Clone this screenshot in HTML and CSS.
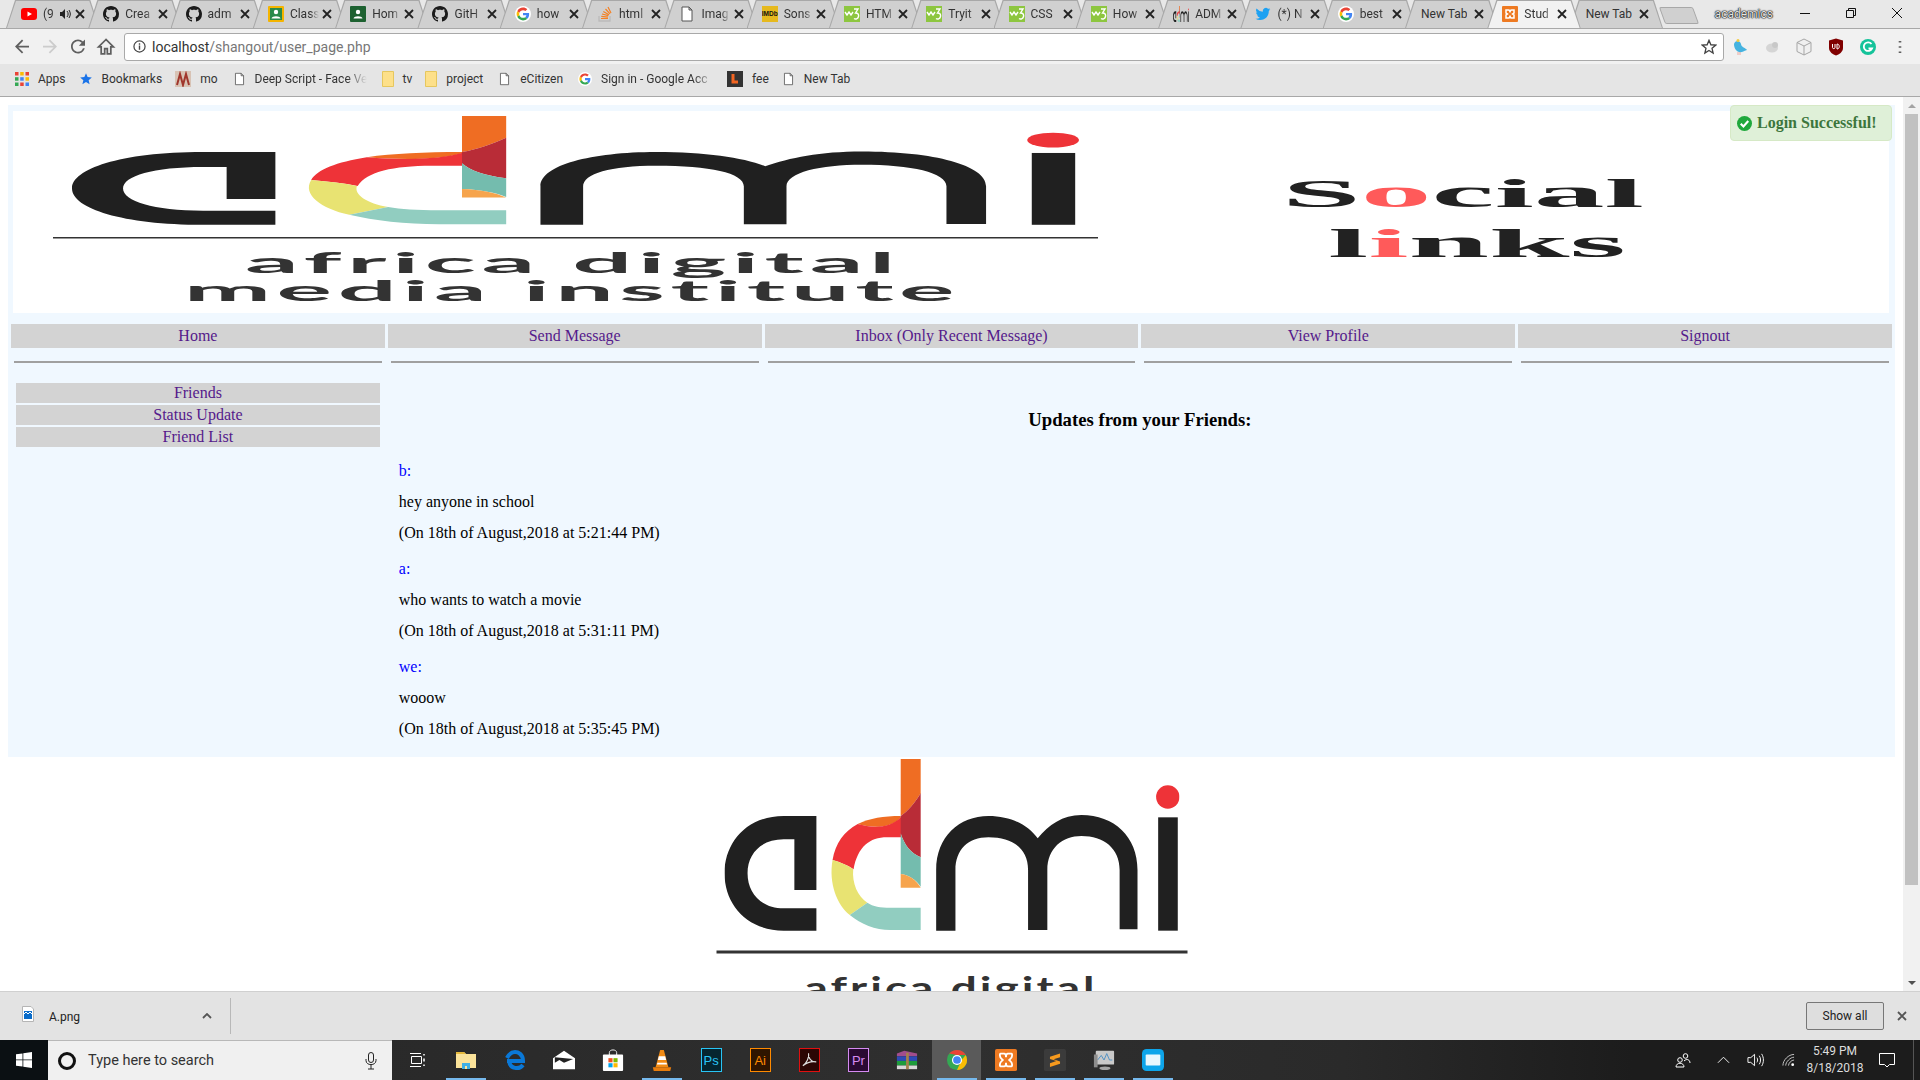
FILE: index.html
```html
<!DOCTYPE html>
<html lang="en">
<head>
  <meta charset="UTF-8" />
  <title>Student page</title>
  <link rel="stylesheet" href="styles.css">
</head>
<body>
  <svg class="defs" width="0" height="0">
    <symbol id="admi-mark" viewBox="128 27 1322 516" preserveAspectRatio="none">
      <path fill="#202020" d="M395 198L300 198C190 198 128 280 128 370C128 465 195 542 300 542L395 542L395 475L300 475C235 475 195 430 195 370C195 310 235 268 300 268L331 268L331 420L395 420Z"/>
      <path fill="#ef6d23" d="M515 222C550 205 590 198 640 198L640 203C610 235 560 235 515 222Z"/>
      <path fill="#ee3338" d="M442 330C450 280 475 245 515 222C560 235 610 235 642 200L642 262L600 262C550 262 515 290 503 358C485 345 465 337 442 330Z"/>
      <path fill="#e8e372" d="M442 330C465 337 485 345 502 358C498 400 515 440 543 458L492 495C455 465 430 400 442 330Z"/>
      <path fill="#91cdc0" d="M543 458C560 470 580 473 610 473L698 473L698 540L610 540C565 540 525 522 492 495Z"/>
      <path fill="#ef6d23" d="M640 27L698 27L698 130C680 160 660 185 640 198Z"/>
      <path fill="#b92c37" d="M698 130L698 322C670 310 650 285 640 250L640 198C660 185 680 160 698 130Z"/>
      <path fill="#74bcae" d="M640 250C650 285 670 310 698 322L698 410C685 390 665 375 640 372Z"/>
      <path fill="#f6a44d" d="M640 372C665 375 685 390 698 413L640 413Z"/>
      <path fill="#202020" d="M743 542L743 360C743 260 810 198 895 198C960 198 1010 225 1038 265C1070 225 1110 195 1165 195C1260 195 1328 260 1328 360L1328 538L1276 538L1276 360C1276 295 1230 258 1165 258C1110 258 1066 295 1066 360L1066 540L1010 540L1010 360C1010 295 965 262 895 262C835 262 799 300 799 360L799 542Z"/>
      <rect fill="#202020" x="1388" y="202" width="57" height="340"/>
      <ellipse fill="#ee3338" cx="1416" cy="141" rx="34" ry="35"/>
    </symbol>
    <symbol id="i-x" viewBox="0 0 10 10"><path d="M1 1L9 9M9 1L1 9" fill="none" stroke="#222" stroke-width="1.8"/></symbol>
    <symbol id="i-gh" viewBox="0 0 16 16"><path fill="#1b1b1b" d="M8 0C3.58 0 0 3.58 0 8c0 3.54 2.29 6.53 5.47 7.59.4.07.55-.17.55-.38 0-.19-.01-.82-.01-1.49-2.01.37-2.53-.49-2.69-.94-.09-.23-.48-.94-.82-1.13-.28-.15-.68-.52-.01-.53.63-.01 1.08.58 1.23.82.72 1.21 1.87.87 2.33.66.07-.52.28-.87.51-1.07-1.78-.2-3.64-.89-3.64-3.95 0-.87.31-1.59.82-2.15-.08-.2-.36-1.02.08-2.12 0 0 .67-.21 2.2.82.64-.18 1.32-.27 2-.27.68 0 1.36.09 2 .27 1.53-1.04 2.2-.82 2.2-.82.44 1.1.16 1.92.08 2.12.51.56.82 1.27.82 2.15 0 3.07-1.87 3.75-3.65 3.95.29.25.54.73.54 1.48 0 1.07-.01 1.93-.01 2.2 0 .21.15.46.55.38A8.013 8.013 0 0016 8c0-4.42-3.58-8-8-8z"/></symbol>
    <symbol id="i-g" viewBox="-6 -6 60 60">
      <circle cx="24" cy="24" r="30" fill="#fff"/>
      <path fill="#EA4335" d="M24 9.5c3.54 0 6.71 1.22 9.21 3.6l6.85-6.85C35.9 2.38 30.47 0 24 0 14.62 0 6.51 5.38 2.56 13.22l7.98 6.19C12.43 13.72 17.74 9.5 24 9.5z"/>
      <path fill="#4285F4" d="M46.98 24.55c0-1.57-.15-3.09-.38-4.55H24v9.02h12.94c-.58 2.96-2.26 5.48-4.78 7.18l7.73 6c4.51-4.18 7.09-10.36 7.09-17.65z"/>
      <path fill="#FBBC05" d="M10.53 28.59c-.48-1.45-.76-2.99-.76-4.59s.27-3.14.76-4.59l-7.98-6.19C.92 16.46 0 20.12 0 24c0 3.88.92 7.54 2.56 10.78l7.97-6.19z"/>
      <path fill="#34A853" d="M24 48c6.48 0 11.93-2.13 15.89-5.81l-7.73-6c-2.15 1.45-4.92 2.3-8.16 2.3-6.26 0-11.57-4.22-13.47-9.91l-7.98 6.19C6.51 42.62 14.62 48 24 48z"/>
    </symbol>
    <symbol id="i-doc" viewBox="0 0 16 16"><path d="M3 1H10L13 4V15H3ZM10 1V4H13" fill="#fff" stroke="#555" stroke-width="1"/></symbol>
    <symbol id="i-w3" viewBox="0 0 16 16">
      <rect width="16" height="16" fill="#8dc63f"/>
      <path d="M1 6L3 9L5 6L7 9L9 6M10 3H14L11.5 7C14 7 15 8.5 14.5 10.5C14 13 11.5 13.5 10 12.5" fill="none" stroke="#fff" stroke-width="1.4"/>
    </symbol>
    <symbol id="i-folder" viewBox="0 0 12 16"><path d="M.5 .5H11.5V15.5H.5Z" fill="#fde08a" stroke="#e6c75e"/></symbol>
    <symbol id="i-person" viewBox="0 0 16 16"><circle cx="8" cy="6" r="2.2" fill="#fff"/><path d="M3.5 12.5C4 9.5 12 9.5 12.5 12.5Z" fill="#fff"/></symbol>
  </svg>

  <header class="chrome">
    <div class="tabstrip">
      <div class="tab tab-audio">
        <svg class="fav" viewBox="0 0 16 16"><rect y="2" width="16" height="12" rx="3" fill="#f00"/><path d="M6.5 5.5V10.5L11 8Z" fill="#fff"/></svg>
        <span class="tab-title">(9</span>
        <svg class="speaker" viewBox="0 0 12 12"><path d="M1 4H3L6 1V11L3 8H1Z" fill="#222"/><path d="M8 3C9.5 5 9.5 7 8 9M10 2C11.8 5 11.8 7 10 10" fill="none" stroke="#222"/></svg>
        <svg class="tab-x"><use href="#i-x"/></svg>
      </div>
      <div class="tab"><svg class="fav"><use href="#i-gh"/></svg><span class="tab-title">Crea</span><svg class="tab-x"><use href="#i-x"/></svg></div>
      <div class="tab"><svg class="fav"><use href="#i-gh"/></svg><span class="tab-title">adm</span><svg class="tab-x"><use href="#i-x"/></svg></div>
      <div class="tab">
        <svg class="fav" viewBox="0 0 16 16"><rect width="16" height="16" rx="1" fill="#f4b400"/><rect x="2" y="2" width="12" height="12" fill="#2a8a4a"/><use href="#i-person"/></svg>
        <span class="tab-title">Class</span><svg class="tab-x"><use href="#i-x"/></svg>
      </div>
      <div class="tab">
        <svg class="fav" viewBox="0 0 16 16"><rect width="16" height="16" rx="1" fill="#1d6130"/><use href="#i-person"/></svg>
        <span class="tab-title">Hom</span><svg class="tab-x"><use href="#i-x"/></svg>
      </div>
      <div class="tab"><svg class="fav"><use href="#i-gh"/></svg><span class="tab-title">GitH</span><svg class="tab-x"><use href="#i-x"/></svg></div>
      <div class="tab"><svg class="fav"><use href="#i-g"/></svg><span class="tab-title">how</span><svg class="tab-x"><use href="#i-x"/></svg></div>
      <div class="tab">
        <svg class="fav" viewBox="0 0 16 16"><path d="M2 10V15H13V10" fill="none" stroke="#bcbbbb" stroke-width="1.3"/><path d="M4 12.5H11M4.3 10.3L11 11.2M5 8L11.4 9.6M6.3 5.5L12 8.8M8.5 3L13 7.8M11 1L14 7" fill="none" stroke="#f48024" stroke-width="1.2"/></svg>
        <span class="tab-title">html</span><svg class="tab-x"><use href="#i-x"/></svg>
      </div>
      <div class="tab"><svg class="fav"><use href="#i-doc"/></svg><span class="tab-title">Imag</span><svg class="tab-x"><use href="#i-x"/></svg></div>
      <div class="tab">
        <span class="fav imdb">IMDb</span>
        <span class="tab-title">Sons</span><svg class="tab-x"><use href="#i-x"/></svg>
      </div>
      <div class="tab"><svg class="fav"><use href="#i-w3"/></svg><span class="tab-title">HTM</span><svg class="tab-x"><use href="#i-x"/></svg></div>
      <div class="tab"><svg class="fav"><use href="#i-w3"/></svg><span class="tab-title">Tryit</span><svg class="tab-x"><use href="#i-x"/></svg></div>
      <div class="tab"><svg class="fav"><use href="#i-w3"/></svg><span class="tab-title">CSS</span><svg class="tab-x"><use href="#i-x"/></svg></div>
      <div class="tab"><svg class="fav"><use href="#i-w3"/></svg><span class="tab-title">How</span><svg class="tab-x"><use href="#i-x"/></svg></div>
      <div class="tab"><svg class="fav"><use href="#admi-mark"/></svg><span class="tab-title">ADM</span><svg class="tab-x"><use href="#i-x"/></svg></div>
      <div class="tab">
        <svg class="fav" viewBox="0 0 24 24"><path fill="#1da1f2" d="M23 5c-.8.4-1.7.6-2.6.7.9-.6 1.6-1.4 2-2.5-.9.5-1.9.9-2.9 1.1A4.6 4.6 0 0011.7 8.500 13 13 0 012.300 3.700a4.600 4.600 0 001.400 6.100c-.7 0-1.400-.2-2.100-.6 0 2.200 1.600 4.100 3.700 4.600-.7.2-1.400.2-2.100.1.6 1.900 2.300 3.200 4.300 3.200A9.200 9.200 0 01.700 19a13 13 0 007 2c8.500 0 13.300-7.200 13-13.600.9-.7 1.700-1.500 2.300-2.400z"/></svg>
        <span class="tab-title">(*) N</span><svg class="tab-x"><use href="#i-x"/></svg>
      </div>
      <div class="tab"><svg class="fav"><use href="#i-g"/></svg><span class="tab-title">best</span><svg class="tab-x"><use href="#i-x"/></svg></div>
      <div class="tab tab-plain"><span class="tab-title">New Tab</span><svg class="tab-x"><use href="#i-x"/></svg></div>
      <div class="tab tab-active">
        <svg class="fav" viewBox="0 0 16 16"><rect width="16" height="16" rx="1" fill="#ee7a22"/><path d="M4 4H6.500C8 4 8 6 8 6.500C8 6 8 4 9.500 4H12V7L10.500 8L12 9V12H9.500C8 12 8 10 8 9.500C8 10 8 12 6.500 12H4V9L5.500 8L4 7Z" fill="none" stroke="#fff" stroke-width="1.500"/></svg>
        <span class="tab-title">Stud</span><svg class="tab-x"><use href="#i-x"/></svg>
      </div>
      <div class="tab tab-plain"><span class="tab-title">New Tab</span><svg class="tab-x"><use href="#i-x"/></svg></div>
      <div class="new-tab"></div>
      <div class="profile">academics</div>
      <div class="win-btn"><svg viewBox="0 0 12 12"><path d="M1 6.500H11" stroke="#111"/></svg></div>
      <div class="win-btn"><svg viewBox="0 0 12 12"><path d="M1.500 3.500H8.500V10.500H1.500ZM3.500 3.500V1.500H10.500V8.500H8.500" fill="none" stroke="#111"/></svg></div>
      <div class="win-btn"><svg viewBox="0 0 12 12"><path d="M1 1L11 11M11 1L1 11" stroke="#111"/></svg></div>
    </div>

    <div class="toolbar">
      <svg class="tool" viewBox="0 0 24 24"><path fill="#5f5f5f" d="M20 11H7.830l5.590-5.590L12 4l-8 8 8 8 1.410-1.410L7.830 13H20z"/></svg>
      <svg class="tool" viewBox="0 0 24 24"><path fill="#cccccc" d="M4 11h12.170l-5.590-5.590L12 4l8 8-8 8-1.410-1.410L16.170 13H4z"/></svg>
      <svg class="tool" viewBox="0 0 24 24"><path fill="#5f5f5f" d="M17.650 6.350A7.958 7.958 0 0012 4c-4.420 0-7.990 3.580-7.990 8s3.570 8 7.990 8c3.730 0 6.840-2.550 7.730-6h-2.080A5.990 5.990 0 0112 18c-3.310 0-6-2.690-6-6s2.690-6 6-6c1.660 0 3.140.690 4.220 1.780L13 11h7V4z"/></svg>
      <svg class="tool" viewBox="0 0 24 24"><path fill="none" stroke="#5f5f5f" stroke-width="2" d="M12 4L3.500 12.500H6.500V20.500H10.500V14.500H13.500V20.500H17.500V12.500H20.500Z"/></svg>
      <div class="omnibox">
        <svg class="info" viewBox="0 0 14 14"><circle cx="7" cy="7" r="6" fill="none" stroke="#444" stroke-width="1.300"/><path d="M7 6V10.500M7 3.500V5" stroke="#444" stroke-width="1.500"/></svg>
        <span class="url"><span class="url-host">localhost</span>/shangout/user_page.php</span>
        <svg class="star" viewBox="0 0 24 24"><path fill="none" stroke="#444" stroke-width="2" d="M12 17.270L18.180 21l-1.640-7.030L22 9.240l-7.190-.610L12 2 9.190 8.630 2 9.240l5.460 4.730L5.820 21z"/></svg>
      </div>
      <div class="ext"><svg viewBox="0 0 16 18"><path d="M2 6C3 2 8 2 9 6C9 9 14 10 15 12C11 13 10 15 7 14C4 13 2 10 2 6Z" fill="#45b3e0"/><circle cx="6" cy="2.500" r="1.500" fill="#f3cb3e"/><path d="M6 14V17M8 14V17" stroke="#e9a9a0"/></svg></div>
      <div class="ext"><svg viewBox="0 0 16 16"><ellipse cx="8" cy="9" rx="6" ry="4.500" fill="#d5d5d5"/><circle cx="11" cy="6" r="3" fill="#c8c8c8"/></svg></div>
      <div class="ext"><svg viewBox="0 0 16 18"><path d="M8 1L15 4.500V13.500L8 17L1 13.500V4.500Z" fill="#f0f0f0" stroke="#a5a5a5"/><path d="M1 4.500L8 8L15 4.500M8 8V17" fill="none" stroke="#a5a5a5"/></svg></div>
      <div class="ext"><svg viewBox="0 0 16 18"><path d="M1 2.500L8 .5L15 2.500V10C15 14 11 16.500 8 17.500C5 16.500 1 14 1 10Z" fill="#800000"/><path d="M4.500 6V9.500C4.500 11 7 11 7 9.500V6M9 6V11C12 11 12 6 9 6Z" fill="none" stroke="#fff"/></svg></div>
      <div class="ext"><svg viewBox="0 0 16 16"><circle cx="8" cy="8" r="8" fill="#15c39a"/><path d="M11.500 5A4.300 4.300 0 1 0 12 9.500H8.500" fill="none" stroke="#fff" stroke-width="1.800"/></svg></div>
      <div class="ext"><svg viewBox="0 0 16 16"><path d="M8 2V3.500M8 7.200V8.800M8 12.500V14" stroke="#5f5f5f" stroke-width="2.600"/></svg></div>
    </div>

    <div class="bookmarks">
      <div class="mark"><svg class="mark-ico" viewBox="0 0 14 14">
        <rect width="3.500" height="3.500" fill="#ea4335"/><rect x="5.200" width="3.500" height="3.500" fill="#fbbc05"/><rect x="10.500" width="3.500" height="3.500" fill="#ea4335"/>
        <rect y="5.200" width="3.500" height="3.500" fill="#34a853"/><rect x="5.200" y="5.200" width="3.500" height="3.500" fill="#4285f4"/><rect x="10.500" y="5.200" width="3.500" height="3.500" fill="#fbbc05"/>
        <rect y="10.500" width="3.500" height="3.500" fill="#34a853"/><rect x="5.200" y="10.500" width="3.500" height="3.500" fill="#ea4335"/><rect x="10.500" y="10.500" width="3.500" height="3.500" fill="#4285f4"/></svg><span>Apps</span></div>
      <div class="mark"><svg class="mark-ico" viewBox="0 0 24 24"><path fill="#1a73e8" d="M12 17.270L18.180 21l-1.640-7.030L22 9.240l-7.190-.610L12 2 9.190 8.630 2 9.240l5.460 4.730L5.820 21z"/></svg><span>Bookmarks</span></div>
      <div class="mark"><svg class="mark-wide" viewBox="0 0 16 16"><rect width="16" height="16" fill="#d8c3b5"/><path d="M2 14L5 3L8 14L11 3L14 14" fill="none" stroke="#a0362c" stroke-width="2"/></svg><span>mo</span></div>
      <div class="mark mark-far"><svg class="mark-doc"><use href="#i-doc"/></svg><span class="mark-fade mark-deep">Deep Script - Face Ve</span></div>
      <div class="mark mark-far"><svg class="mark-folder"><use href="#i-folder"/></svg><span>tv</span></div>
      <div class="mark"><svg class="mark-folder"><use href="#i-folder"/></svg><span>project</span></div>
      <div class="mark mark-far"><svg class="mark-doc"><use href="#i-doc"/></svg><span>eCitizen</span></div>
      <div class="mark mark-far"><svg class="mark-ico"><use href="#i-g"/></svg><span class="mark-fade mark-sign">Sign in - Google Acc</span></div>
      <div class="mark"><svg class="mark-wide" viewBox="0 0 16 16"><rect width="16" height="16" fill="#333"/><path d="M6 3V11H11" fill="none" stroke="#f26522" stroke-width="3"/></svg><span>fee</span></div>
      <div class="mark"><svg class="mark-doc"><use href="#i-doc"/></svg><span>New Tab</span></div>
    </div>
  </header>

  <div class="viewport">
    <main class="page">
      <div class="toast">
        <svg class="toast-ico" viewBox="0 0 14 14"><circle cx="7" cy="7" r="7" fill="#1fa83c"/><path d="M3.500 7.200L6 9.700L10.500 4.700" fill="none" stroke="#fff" stroke-width="2"/></svg>
        Login Successful!
      </div>

      <section class="panel">
        <div class="banner">
          <svg class="banner-logo" viewBox="0 0 1100 202">
            <use href="#admi-mark" x="59" y="5" width="1007" height="109"/>
            <rect x="40" y="126" width="1045" height="1.500" fill="#333"/>
            <text class="logo-text" x="232" y="162" textLength="656" lengthAdjust="spacingAndGlyphs">africa digital</text>
            <text class="logo-text" x="171" y="189.500" textLength="776" lengthAdjust="spacingAndGlyphs">media institute</text>
          </svg>
          <svg class="banner-social" viewBox="0 0 440 130">
            <text class="social-text" x="42" y="57" textLength="362" lengthAdjust="spacingAndGlyphs">S<tspan class="social-red">o</tspan>cial</text>
            <text class="social-text" x="88" y="107" textLength="298" lengthAdjust="spacingAndGlyphs">l<tspan class="social-red">i</tspan>nks</text>
          </svg>
        </div>

        <nav class="grid5 nav">
          <a class="nav-link" href="#">Home</a>
          <a class="nav-link" href="#">Send Message</a>
          <a class="nav-link" href="#">Inbox (Only Recent Message)</a>
          <a class="nav-link" href="#">View Profile</a>
          <a class="nav-link" href="#">Signout</a>
        </nav>

        <div class="grid5 rules">
          <hr><hr><hr><hr><hr>
        </div>

        <div class="grid5">
          <aside class="side">
            <a class="nav-link side-link" href="#">Friends</a>
            <a class="nav-link side-link" href="#">Status Update</a>
            <a class="nav-link side-link" href="#">Friend List</a>
          </aside>
          <div class="updates">
            <h3>Updates from your Friends:</h3>
            <div class="post">
              <p class="who">b:</p>
              <p>hey anyone in school</p>
              <p>(On 18th of August,2018 at 5:21:44 PM)</p>
            </div>
            <div class="post">
              <p class="who">a:</p>
              <p>who wants to watch a movie</p>
              <p>(On 18th of August,2018 at 5:31:11 PM)</p>
            </div>
            <div class="post">
              <p class="who">we:</p>
              <p>wooow</p>
              <p>(On 18th of August,2018 at 5:35:45 PM)</p>
            </div>
          </div>
        </div>
      </section>

      <svg class="footer-logo" viewBox="0 0 500 250">
        <use href="#admi-mark" x="22.500" y="2" width="455" height="172"/>
        <rect x="14.500" y="193.500" width="471" height="3" fill="#333"/>
        <text class="logo-text logo-text-big" x="102.500" y="241.500" textLength="293" lengthAdjust="spacingAndGlyphs">africa digital</text>
      </svg>
    </main>

    <div class="scrollbar">
      <div class="scroll-btn"><span class="arrow-up"></span></div>
      <div class="scroll-track"><div class="scroll-thumb"></div></div>
      <div class="scroll-btn"><span class="arrow-down"></span></div>
    </div>
  </div>

  <div class="downloads">
    <div class="dl-file">
      <svg class="dl-ico" viewBox="0 0 12 16"><path d="M.5 .5H9L11.500 3V15.500H.5Z" fill="#fff" stroke="#b5b5b5"/><rect x="2" y="5" width="8" height="8" fill="#0a6cc9"/><path d="M2 8L4 6L6 8L8 6L10 8" fill="none" stroke="#fff"/></svg>
      <span class="dl-name">A.png</span>
      <svg class="dl-caret" viewBox="0 0 10 6"><path d="M1 5L5 1L9 5" fill="none" stroke="#555" stroke-width="1.800"/></svg>
    </div>
    <button class="show-all">Show all</button>
    <svg class="dl-close" viewBox="0 0 10 10"><path d="M1 1L9 9M9 1L1 9" fill="none" stroke="#555" stroke-width="1.800"/></svg>
  </div>

  <footer class="taskbar">
    <div class="start"><svg viewBox="0 0 16 16"><path fill="#fff" d="M0 2.300L6.500 1.400V7.500H0ZM7.300 1.300L16 0V7.500H7.300ZM0 8.300H6.500V14.600L0 13.700ZM7.300 8.300H16V16L7.300 14.700Z"/></svg></div>
    <div class="search">
      <span class="cortana"></span>
      <span class="search-text">Type here to search</span>
      <svg class="mic" viewBox="0 0 12 18"><rect x="3.500" y=".5" width="5" height="10" rx="2.500" fill="none" stroke="#222"/><path d="M1 7V8.500C1 14 11 14 11 8.500V7M6 13V17M3 17H9" fill="none" stroke="#222"/></svg>
    </div>
    <div class="task"><svg class="task-view" viewBox="0 0 16 16"><path d="M2.500 4.500H12.500V11.500H2.500ZM1 1.500H12M1 14.500H12" fill="none" stroke="#fff"/><path d="M15 2V3.500M15 6.500V9.500M15 12.500V14" stroke="#fff" stroke-width="1.500"/></svg></div>
    <div class="task run"><svg viewBox="0 0 22 22"><path d="M1 3H9L11 5H21V19H1Z" fill="#fbe39a"/><path d="M1 3H9L11 5H1Z" fill="#e6b93b"/><path d="M7 14H15V20H7Z" fill="#3fb0e6"/><path d="M10 17H12V20H10Z" fill="#fbe39a"/></svg></div>
    <div class="task"><svg viewBox="0 0 22 22"><path d="M3 12H19C19 5 14 3 11 3C6 3 4 7 3 9M19 16C15 21 6 20 5 12" fill="none" stroke="#0a78d7" stroke-width="4"/></svg></div>
    <div class="task"><svg viewBox="0 0 24 22"><path d="M0 9L12 1L24 9V21H0Z" fill="#fff"/><path d="M2 8L22 10L12 14L7 11L2 14Z" fill="#222"/></svg></div>
    <div class="task"><svg viewBox="0 0 22 24"><path d="M7 7V4C7 0 15 0 15 4V7" fill="none" stroke="#fff"/><rect x="0" y="6" width="22" height="18" rx="1" fill="#fff"/><rect x="6" y="10" width="4.500" height="4.500" fill="#f25022"/><rect x="11.500" y="10" width="4.500" height="4.500" fill="#7fba00"/><rect x="6" y="15.500" width="4.500" height="4.500" fill="#00a4ef"/><rect x="11.500" y="15.500" width="4.500" height="4.500" fill="#ffb900"/></svg></div>
    <div class="task run"><svg viewBox="0 0 22 24"><path d="M9 1H13L18 20H4Z" fill="#f28b14"/><path d="M7.500 8H14.500L15.500 12H6.500ZM6 15H16L16.500 17H5.500Z" fill="#fff"/><path d="M1 20H21L20 24H2Z" fill="#e87d0d"/></svg></div>
    <div class="task"><span class="app-box app-ps">Ps</span></div>
    <div class="task"><span class="app-box app-ai">Ai</span></div>
    <div class="task"><span class="app-box app-acro"><svg viewBox="0 0 20 20"><path d="M3 16C7 13 10 7 9 3C8 7 12 13 17 12C12 11 7 13 3 16Z" fill="none" stroke="#ddd" stroke-width="1.200"/></svg></span></div>
    <div class="task"><span class="app-box app-pr">Pr</span></div>
    <div class="task"><svg viewBox="0 0 24 22"><path d="M1 4L9 1L23 4V7L1 7Z" fill="#a24d8c"/><rect x="1" y="7" width="22" height="5" fill="#2f49b8"/><rect x="1" y="12" width="22" height="5" fill="#1d9c3b"/><rect x="1" y="17" width="22" height="4" fill="#d8d8d8"/><rect x="11" y="3" width="3" height="18" fill="#a5814a"/></svg></div>
    <div class="task task-on run"><svg viewBox="0 0 24 24"><circle cx="12" cy="12" r="11" fill="#34a853"/><path d="M12 1A11 11 0 0 1 21.500 6.500H12L3.500 5A11 11 0 0 1 12 1Z" fill="#ea4335"/><path d="M21.500 6.500A11 11 0 0 1 12 23L17 12Z" fill="#fbbc05"/><circle cx="12" cy="12" r="5.500" fill="#fff"/><circle cx="12" cy="12" r="4.200" fill="#4285f4"/></svg></div>
    <div class="task run"><svg viewBox="0 0 24 24"><rect width="24" height="24" rx="2" fill="#ee7a22"/><path d="M6 5H10C12 5 12 8 12 9C12 8 12 5 14 5H18C19 5 19 9 17 10.500L15.500 12L17 13.500C19 15 19 19 18 19H14C12 19 12 16 12 15C12 16 12 19 10 19H6C5 19 5 15 7 13.500L8.500 12L7 10.500C5 9 5 5 6 5Z" fill="none" stroke="#fff" stroke-width="2"/></svg></div>
    <div class="task run"><svg viewBox="0 0 24 24"><rect width="24" height="24" rx="2" fill="#3b3b3b"/><path d="M6.500 8.500L17.500 5V9L10.500 11.200L17.500 13.500V16L6.500 19.500V15.500L13.500 13.200L6.500 11Z" fill="#f79a1e"/></svg></div>
    <div class="task run"><svg viewBox="0 0 24 24"><rect x="3" y="2" width="20" height="15" rx="1" fill="#c9c9c9"/><path d="M5 12L9 7L12 12L15 5L18 12H21" fill="none" stroke="#4a8ec4"/><rect x="1" y="6" width="4" height="14" fill="#8d8d8d"/><ellipse cx="13" cy="21" rx="6" ry="2" fill="#a5a5a5"/></svg></div>
    <div class="task run"><svg viewBox="0 0 24 24"><rect width="24" height="24" rx="5" fill="#0ea5ea"/><rect x="4" y="6" width="16" height="12" rx="1" fill="#e9f7fd"/></svg></div>

    <div class="tray tray-people"><svg viewBox="0 0 16 16"><circle cx="5" cy="8" r="2.300" fill="none" stroke="#fff"/><circle cx="10.500" cy="4" r="2.300" fill="none" stroke="#fff"/><path d="M1 15C1 10 9 10 9 15H1ZM9 9C12 6 15 8 15 11" fill="none" stroke="#fff"/></svg></div>
    <div class="tray tray-caret"><svg viewBox="0 0 14 8"><path d="M1 7L7 1L13 7" fill="none" stroke="#fff"/></svg></div>
    <div class="tray tray-sound"><svg viewBox="0 0 18 16"><path d="M1 5.500H4L8 2V14L4 10.500H1Z" fill="none" stroke="#fff"/><path d="M10.500 5.500C11.500 7 11.500 9 10.500 10.500M13 3.500C14.800 6 14.800 10 13 12.500M15.500 1.500C18 5.500 18 10.500 15.500 14.500" fill="none" stroke="#fff"/></svg></div>
    <div class="tray tray-wifi"><svg viewBox="0 0 14 14"><path d="M1 13C1 7 7 1 13 1M4 13C4 9 9 4 13 4M7 13C7 10.500 10 7 13 7" fill="none" stroke="#ccc"/><circle cx="11.500" cy="12" r="1.500" fill="#fff"/></svg></div>
    <div class="clock"><span>5:49 PM</span><span>8/18/2018</span></div>
    <div class="tray tray-note"><svg viewBox="0 0 16 16"><path d="M.5 1.500H15.500V12.500H10.500L8 15L5.500 12.500H.5Z" fill="none" stroke="#fff"/></svg></div>
    <div class="tray-end"></div>
  </footer>
</body>
</html>
```
FILE: styles.css
```css
/* base */
* {
  box-sizing: border-box;
}
html, body {
  height: 100%;
}
body {
  margin: 0;
  display: flex;
  flex-direction: column;
  height: 1080px;
  overflow: hidden;
  background: #fff;
  font-family: "Liberation Serif", serif;
  font-size: 16px;
  color: #000;
}
.defs {
  display: block;
  height: 0;
}

/* browser chrome */
.chrome {
  font-family: Roboto, "Noto Sans", sans-serif;
  font-size: 12px;
  color: #333;
  border-bottom: 1px solid #a8a8a8;
}
.tabstrip {
  display: flex;
  align-items: stretch;
  height: 29px;
  padding-left: 6px;
  background: #e8e8e8;
  border-bottom: 1px solid #a8a8a8;
}
.tab {
  position: relative;
  display: flex;
  align-items: center;
  flex: none;
  width: 93.3px;
  margin-right: -11px;
  padding: 0 14px 0 15px;
  background: #a8a8a8;
  clip-path: polygon(0 100%, 9px 0, calc(100% - 9px) 0, 100% 100%);
}
.tab::before {
  content: "";
  position: absolute;
  inset: 1px 1px 0;
  background: #d0d0d0;
  clip-path: polygon(0 100%, 9px 0, calc(100% - 9px) 0, 100% 100%);
}
.tab > * {
  position: relative;
}
.tab-active {
  z-index: 1;
}
.tab-active::before {
  background: #f2f2f2;
}
.fav {
  flex: none;
  width: 16px;
  height: 16px;
  margin-right: 6px;
}
.imdb {
  background: #e6b91e;
  color: #111;
  font-family: "Liberation Sans", sans-serif;
  font-size: 6.5px;
  font-weight: 700;
  line-height: 16px;
  text-align: center;
  overflow: hidden;
}
.tab-title {
  flex: none;
  width: 29px;
  overflow: hidden;
  white-space: nowrap;
  -webkit-mask-image: linear-gradient(to right, #000 70%, transparent);
  mask-image: linear-gradient(to right, #000 70%, transparent);
}
.tab-audio .tab-title {
  width: 13px;
}
.speaker {
  flex: none;
  width: 12px;
  height: 12px;
  margin-left: 3px;
}
.tab-plain {
  padding-left: 16px;
}
.tab-plain .tab-title {
  width: 46px;
  -webkit-mask-image: none;
  mask-image: none;
}
.tab-x {
  flex: none;
  width: 10px;
  height: 10px;
  margin-left: auto;
}
.new-tab {
  flex: none;
  width: 34px;
  height: 17px;
  margin: 7px 0 0 10px;
  background: #d0d0d0;
  border: 1px solid #a8a8a8;
  border-radius: 2px;
  transform: skewX(20deg);
}
.profile {
  margin: 0 9px 0 auto;
  line-height: 28px;
  color: #e4e4e4;
  text-shadow: 0 0 2px #000, 0 0 1px #000, 0 0 1px #000;
}
.win-btn {
  display: flex;
  align-items: center;
  justify-content: center;
  flex: none;
  width: 46px;
  padding-bottom: 3px;
}
.win-btn svg {
  width: 12px;
  height: 12px;
}
.toolbar {
  display: flex;
  align-items: center;
  height: 35px;
  padding: 0 4px 0 8px;
  background: #f1f1f1;
}
.tool {
  flex: none;
  width: 28px;
  height: 21px;
}
.omnibox {
  display: flex;
  align-items: center;
  flex: 1;
  height: 28px;
  margin-left: 4px;
  padding: 0 6px 0 8px;
  background: #fff;
  border: 1px solid #a9a9a9;
  border-radius: 3px;
}
.info {
  flex: none;
  width: 13px;
  height: 13px;
  margin-right: 6px;
}
.url {
  flex: 1;
  font-size: 14px;
  color: #777;
}
.url-host {
  color: #333;
}
.star {
  flex: none;
  width: 16px;
  height: 16px;
}
.ext {
  display: flex;
  align-items: center;
  justify-content: center;
  flex: none;
  width: 32px;
}
.ext svg {
  width: 16px;
  height: 18px;
}
.bookmarks {
  display: flex;
  align-items: center;
  gap: 13px;
  height: 32px;
  padding: 0 0 3px 15px;
  background: #e5e5e5;
}
.mark {
  display: flex;
  align-items: center;
  gap: 9px;
  flex: none;
  white-space: nowrap;
}
.mark-far {
  margin-left: 2px;
}
.mark-ico {
  width: 14px;
  height: 14px;
}
.mark-wide {
  width: 16px;
  height: 16px;
}
.mark-doc {
  width: 13px;
  height: 16px;
}
.mark-folder {
  width: 12px;
  height: 16px;
}
.mark-fade {
  overflow: hidden;
  -webkit-mask-image: linear-gradient(to right, #000 82%, transparent);
  mask-image: linear-gradient(to right, #000 82%, transparent);
}
.mark-deep {
  width: 112px;
}
.mark-sign {
  width: 113px;
}

/* page area */
.viewport {
  display: flex;
  flex: none;
  height: 894px;
}
.page {
  position: relative;
  flex: 1;
  min-width: 0;
  padding: 8px 8px 0;
  overflow: hidden;
}
.toast {
  position: absolute;
  top: 8px;
  right: 11px;
  display: flex;
  align-items: center;
  gap: 5px;
  width: 162px;
  height: 36px;
  padding-left: 6px;
  background: #dff0d8;
  border: 1px solid #d6e9c6;
  border-radius: 4px;
  color: #3c763d;
  font-weight: 700;
}
.toast-ico {
  flex: none;
  width: 15px;
  height: 15px;
}
.panel {
  padding: 6px 3px 18px;
  background: #f0f8ff;
}
.banner {
  display: flex;
  height: 202px;
  margin: 0 3px 0 2px;
  background: #fff;
}
.banner-logo {
  flex: none;
  width: 1100px;
  height: 202px;
}
.banner-social {
  flex: none;
  width: 440px;
  height: 130px;
  margin: 39px 0 0 127px;
}
.logo-text {
  font-family: Lato, "Noto Sans", sans-serif;
  font-size: 28px;
  font-weight: 700;
  letter-spacing: 1.5px;
  fill: #333;
}
.logo-text-big {
  font-size: 30px;
  letter-spacing: 2px;
}
.social-text {
  font-family: "Liberation Serif", serif;
  font-size: 40px;
  font-weight: 700;
  fill: #222;
}
.social-red {
  fill: #ff5a5a;
}
.grid5 {
  display: grid;
  grid-template-columns: repeat(5, minmax(0, 1fr));
  column-gap: 3px;
}
.nav {
  margin-top: 11px;
}
.nav-link {
  display: block;
  height: 24px;
  background: #d3d3d3;
  color: #551a8b;
  line-height: 24px;
  text-align: center;
  text-decoration: none;
}
.rules {
  margin-top: 13px;
}
.rules hr {
  height: 2px;
  margin: 0 3px;
  border: 0;
  background: #a0a0a0;
}
.side {
  display: flex;
  flex-direction: column;
  gap: 2px;
  padding: 20px 5px 0;
}
.side-link {
  height: 20px;
  line-height: 20px;
}
.updates {
  grid-column: 2 / 6;
}
.updates h3 {
  margin: 46px 0 30px;
  font-size: 18.72px;
  line-height: 22px;
  text-align: center;
}
.post {
  margin: 0 0 16px 11px;
}
.post p {
  margin: 0 0 11px;
  line-height: 20px;
}
.post:last-child {
  margin-bottom: 0;
}
.post:last-child p:last-child {
  margin-bottom: 0;
}
.who {
  color: #00f;
}
.footer-logo {
  display: block;
  width: 500px;
  height: 250px;
  margin: 0 auto;
}
.scrollbar {
  display: flex;
  flex-direction: column;
  flex: none;
  width: 17px;
  background: #f1f1f1;
}
.scroll-btn {
  display: flex;
  align-items: center;
  justify-content: center;
  flex: none;
  height: 17px;
}
.arrow-up,
.arrow-down {
  width: 0;
  height: 0;
  border-left: 4px solid transparent;
  border-right: 4px solid transparent;
}
.arrow-up {
  border-bottom: 4px solid #a3a3a3;
}
.arrow-down {
  border-top: 4px solid #505050;
}
.scroll-track {
  flex: 1;
  padding: 0 2px;
}
.scroll-thumb {
  height: 771px;
  background: #c1c1c1;
}

/* download shelf */
.downloads {
  display: flex;
  align-items: center;
  flex: none;
  height: 49px;
  background: #e3e3e3;
  border-top: 1px solid #d0d0d0;
  font-family: Roboto, "Noto Sans", sans-serif;
  font-size: 12px;
  color: #222;
}
.dl-file {
  display: flex;
  align-items: center;
  width: 231px;
  height: 36px;
  padding-left: 22px;
  border-right: 1px solid #b8b8b8;
}
.dl-ico {
  flex: none;
  width: 12px;
  height: 16px;
  margin: -4px 15px 0 0;
}
.dl-name {
  flex: none;
  width: 34px;
  margin-top: 2px;
}
.dl-caret {
  width: 10px;
  height: 6px;
  margin-left: 119px;
}
.show-all {
  width: 78px;
  height: 28px;
  margin-left: auto;
  padding: 0;
  background: #dedede;
  border: 1px solid #777;
  border-radius: 2px;
  color: #222;
  font: inherit;
}
.dl-close {
  width: 10px;
  height: 10px;
  margin: 0 13px;
}

/* windows taskbar */
.taskbar {
  display: flex;
  align-items: stretch;
  flex: none;
  height: 40px;
  background: linear-gradient(to right, #262626, #2f2f2f 50%, #2a2a2a 70%, #1c1c1c 85%);
  font-family: Roboto, "Noto Sans", sans-serif;
  color: #fff;
}
.start {
  display: flex;
  align-items: center;
  justify-content: center;
  flex: none;
  width: 48px;
  background: #0b1013;
}
.start svg {
  width: 16px;
  height: 16px;
}
.search {
  display: flex;
  align-items: center;
  flex: none;
  width: 344px;
  padding-left: 10px;
  background: #f0f0f0;
  border-top: 1px solid #b8b8b8;
  color: #333;
  font-size: 14.5px;
}
.cortana {
  flex: none;
  width: 18px;
  height: 18px;
  margin-right: 12px;
  background: #f0f0f0;
  border: 3px solid #111;
  border-radius: 50%;
}
.search-text {
  flex: 1;
}
.mic {
  flex: none;
  width: 12px;
  height: 18px;
  margin-right: 15px;
}
.task {
  display: flex;
  align-items: center;
  justify-content: center;
  flex: none;
  width: 49.1px;
}
.task svg {
  width: 22px;
  height: 22px;
}
.task .task-view {
  width: 16px;
  height: 16px;
}
.task.run {
  background-image: linear-gradient(#76b9ed, #76b9ed);
  background-repeat: no-repeat;
  background-position: center bottom;
  background-size: 40px 2px;
}
.task-on {
  background-color: #5a5a5a;
}
.app-box {
  display: flex;
  align-items: center;
  justify-content: center;
  width: 21px;
  height: 24px;
  border: 1px solid;
  font-family: "Liberation Sans", sans-serif;
  font-size: 13px;
}
.app-ps {
  color: #29c4f5;
  background: #06252f;
}
.app-ai {
  color: #ff8a00;
  background: #2f1500;
}
.app-acro {
  border-color: #e01010;
  background: #2c0604;
}
.app-pr {
  color: #d58bf2;
  background: #2a0a33;
}
.tray {
  display: flex;
  align-items: center;
  justify-content: center;
  flex: none;
}
.tray-people {
  width: 40px;
  margin-left: auto;
}
.tray-people svg {
  width: 16px;
  height: 16px;
}
.tray-caret {
  width: 40px;
}
.tray-caret svg {
  width: 13px;
  height: 8px;
}
.tray-sound {
  width: 24px;
}
.tray-sound svg {
  width: 17px;
  height: 16px;
}
.tray-wifi {
  width: 42px;
}
.tray-wifi svg {
  width: 13px;
  height: 14px;
}
.clock {
  display: flex;
  flex-direction: column;
  align-items: center;
  justify-content: center;
  flex: none;
  width: 52px;
  font-size: 12px;
  line-height: 17px;
  color: #ddd;
  white-space: nowrap;
}
.tray-note {
  width: 52px;
}
.tray-note svg {
  width: 16px;
  height: 16px;
}
.tray-end {
  flex: none;
  width: 7px;
  margin-left: 0;
  border-left: 1px solid #555;
}
```
